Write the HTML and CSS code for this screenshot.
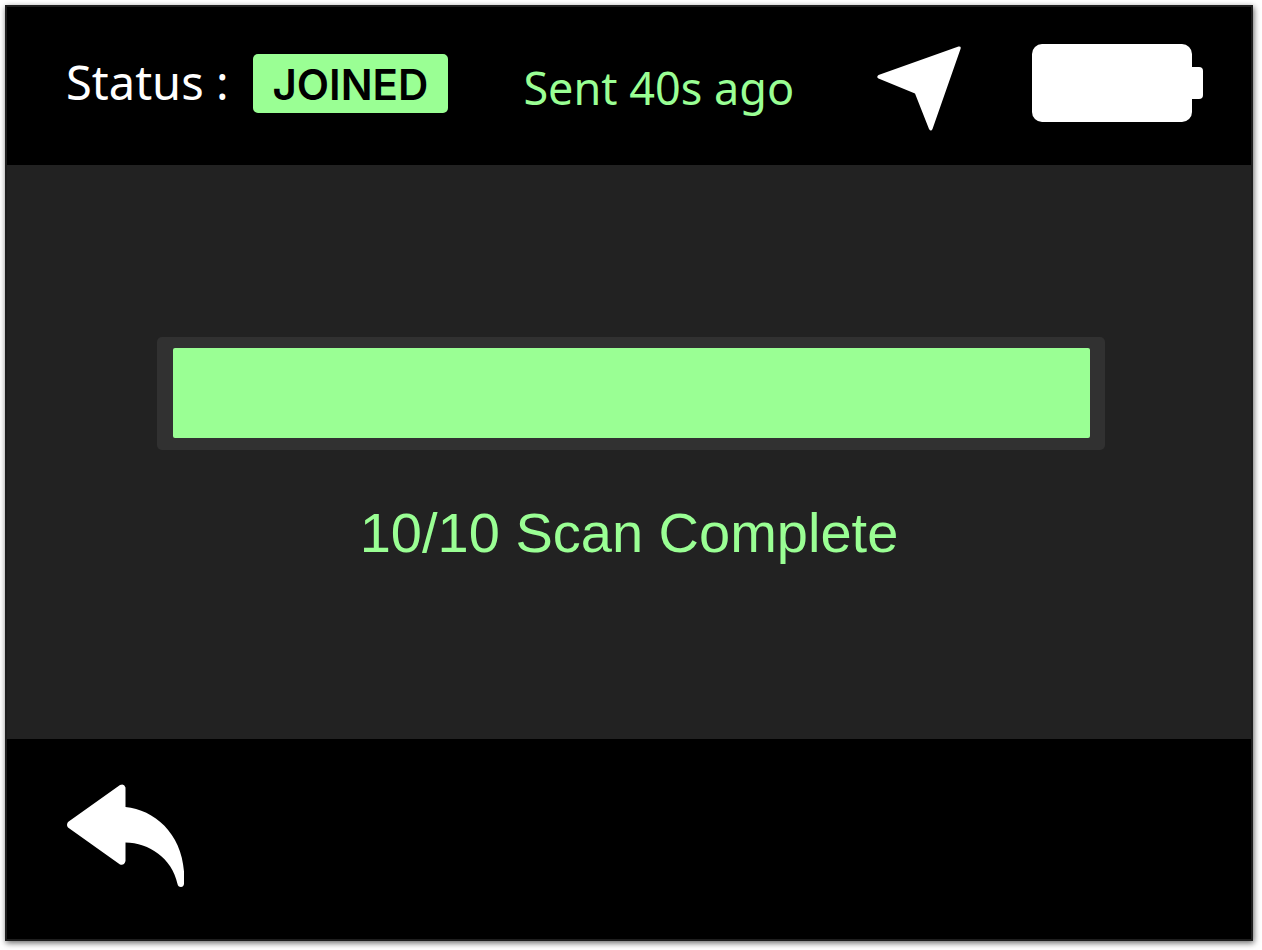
FILE: index.html
```html
<!DOCTYPE html>
<html lang="en">
<head>
<meta charset="utf-8">
<title>Scan status</title>
<link rel="stylesheet" href="styles.css">
</head>
<body>
<div class="screen">
  <header class="topbar">
    <span class="status-label">Status :</span>
    <span class="badge">JOINED</span>
    <span class="sent lowered">Sent 40s ago</span>
    <svg class="nav-icon lowered" viewBox="0 0 84 86" role="img" aria-label="GPS location">
      <path d="M81.500 1.500Q84.500 1 83.500 4L55.500 84Q54 87 52 84L38 48.500L1.500 33.500Q-1 32 1.500 30Z"/>
    </svg>
    <svg class="battery-icon" viewBox="0 0 171 78" role="img" aria-label="Battery full">
      <rect width="160" height="78" rx="10"/>
      <path d="M158 23h9q4 0 4 4v24q0 4-4 4h-9z"/>
    </svg>
  </header>
  <main class="content">
    <div class="track">
      <progress class="bar" id="scan" value="10" max="10"></progress>
    </div>
    <label class="caption" for="scan">10/10 Scan Complete</label>
  </main>
  <footer class="bottombar">
    <button class="back" type="button" aria-label="Back">
      <svg class="back-icon" viewBox="0 0 118 104" aria-hidden="true">
        <path d="M2 38L54 1Q58-1 59.500 3.500V23C91 26 121 54 118 100Q117.500 103 115 103Q112 103 111.500 100C106 74 83 59 59.500 58.500V77Q58 82 54 80.500L2 43.500Q0 41 2 38Z"/>
      </svg>
    </button>
  </footer>
</div>
</body>
</html>
```

FILE: styles.css
```css
* {
  box-sizing: border-box;
}

body {
  margin: 0;
  padding: 5px 9px 9px 5px;
  background: #fff;
}

.screen {
  display: flex;
  flex-direction: column;
  min-height: calc(100vh - 14px);
  background: #222;
  outline: 2px solid #1e1e1e;
  outline-offset: -2px;
  box-shadow: 1px 2px 6px rgba(0, 0, 0, 0.6);
}

.topbar {
  display: flex;
  align-items: center;
  height: 160px;
  padding: 0 50px 4px 61px;
  background: #000;
  font-family: "Noto Sans", sans-serif;
  font-size: 47px;
  line-height: 64px;
  white-space: nowrap;
}

.status-label {
  padding-bottom: 2px;
  color: #fff;
}

.badge {
  margin-left: 25px;
  padding: 3px 20px 0 19px;
  border-radius: 5px;
  background: #9aff94;
  color: #000;
  font-family: Inter, sans-serif;
  font-size: 42px;
  font-weight: 600;
  line-height: 56px;
}

.sent {
  margin-left: 75px;
  color: #9aff94;
  font-size: 45px;
  line-height: 62px;
}

.lowered {
  margin-top: 10px;
}

.nav-icon,
.battery-icon {
  flex: none;
  fill: #fff;
}

.nav-icon {
  width: 84px;
  margin-left: auto;
}

.battery-icon {
  width: 171px;
  margin-left: 71px;
}

.content {
  flex: 1;
  display: flex;
  flex-direction: column;
  align-items: center;
  justify-content: center;
}

.track {
  width: 76%;
  margin-left: 4px;
  padding: 11px 15px 12px 16px;
  border-radius: 5px;
  background: #313131;
}

.bar {
  display: block;
  width: 100%;
  height: 90px;
  border: 0;
  border-radius: 2px;
  overflow: hidden;
  appearance: none;
}

.bar::-webkit-progress-bar {
  background: transparent;
}

.bar::-webkit-progress-value {
  background: #9aff94;
}

.caption {
  margin-top: 50px;
  padding-bottom: 2px;
  color: #9aff94;
  font-family: "Liberation Sans", Arial, sans-serif;
  font-size: 56px;
  line-height: 66px;
}

.bottombar {
  height: 202px;
  padding: 45px 61px;
  background: #000;
}

.back {
  display: block;
  padding: 0;
  border: 0;
  background: none;
  cursor: pointer;
}

.back-icon {
  display: block;
  width: 118px;
  fill: #fff;
}
```
